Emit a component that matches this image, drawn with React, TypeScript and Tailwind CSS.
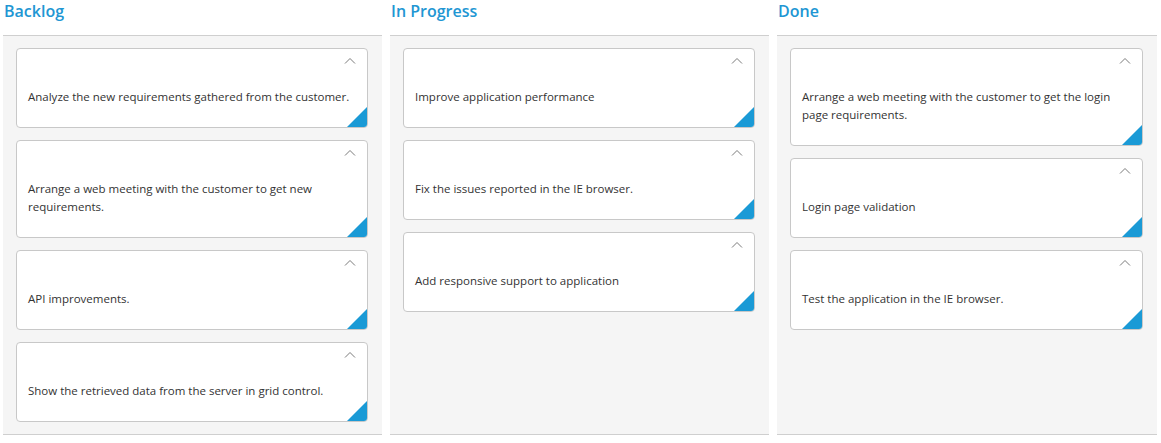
const columns = [
  {
    title: 'Backlog',
    cards: [
      'Analyze the new requirements gathered from the customer.',
      'Arrange a web meeting with the customer to get new requirements.',
      'API improvements.',
      'Show the retrieved data from the server in grid control.',
    ],
  },
  {
    title: 'In Progress',
    cards: [
      'Improve application performance',
      'Fix the issues reported in the IE browser.',
      'Add responsive support to application',
    ],
  },
  {
    title: 'Done',
    cards: [
      'Arrange a web meeting with the customer to get the login page requirements.',
      'Login page validation',
      'Test the application in the IE browser.',
    ],
  },
];

function Card({ text }: { text: string }) {
  return (
    <div className="relative overflow-hidden rounded-[4px] border border-[#c8c8c8] bg-white">
      {/* Header */}
      <div className="flex h-[39px] justify-end pr-[11px] pt-[8px]">
        <svg className="h-[8px] w-[12px]" viewBox="0 0 12 8" fill="none">
          <path d="M1 6.5L6 1.5L11 6.5" stroke="#7a7a7a" strokeWidth={1} />
        </svg>
      </div>

      {/* Content */}
      <div className="pb-[21px] pl-[11px] pr-[14px] text-[11.5px] leading-[18px] text-[#333]">
        {text}
      </div>

      {/* Corner */}
      <div className="absolute bottom-0 right-0 h-0 w-0 border-b-[20px] border-l-[20px] border-b-[#1a9ad6] border-l-transparent" />
    </div>
  );
}

export default function App() {
  return (
    <div
      className="grid h-[443px] grid-cols-[379px_379px_380px] gap-x-[8px] bg-white px-[3px]"
      style={{ fontFamily: '"Open Sans", "Noto Sans", sans-serif' }}
    >
      {columns.map((col) => (
        <div key={col.title} className="flex flex-col pb-[8px]">
          <div className="h-[35px] pl-[1px] text-[16px] font-semibold leading-[22px] text-[#2196d3]">
            {col.title}
          </div>
          <div className="flex flex-1 flex-col gap-[12px] border-y border-[#cfcfcf] bg-[#f5f5f5] pl-[13px] pr-[14px] pt-[12px]">
            {col.cards.map((c) => (
              <Card key={c} text={c} />
            ))}
          </div>
        </div>
      ))}
    </div>
  );
}
